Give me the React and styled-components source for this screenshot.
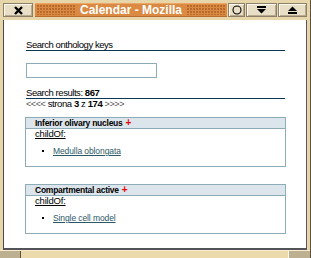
import React from "react";
import styled, { createGlobalStyle } from "styled-components";

const GlobalStyle = createGlobalStyle`
  html, body {
    margin: 0;
    padding: 0;
    background: #e6d4a8;
  }
  body {
    font-family: "Liberation Sans", Arial, sans-serif;
  }
`;

/* Window frame */
const Frame = styled.div`
  width: 311px;
  height: 258px;
  box-sizing: border-box;
  display: flex;
  flex-direction: column;
  background: #e8d6ab;
  border-right: 1px solid #5a503c;
`;

const TitleBar = styled.div`
  height: 20px;
  box-sizing: border-box;
  padding: 3px 3px 0 3px;
  display: flex;
  align-items: flex-start;
  gap: 1px;
`;

const FrameButton = styled.div`
  width: ${(p) => p.w}px;
  height: 14px;
  box-sizing: border-box;
  margin-right: ${(p) => p.gapRight || 0}px;
  background: #e9dfc6;
  border: 1px solid #8d806a;
  box-shadow: inset 1px 1px 0 #fffaec, inset -1px -1px 0 #b8aa8e;
  display: flex;
  align-items: center;
  justify-content: center;
`;

const TitleStrip = styled.div`
  flex: 1;
  height: 14px;
  display: flex;
  align-items: center;
  background: #da8a43;
  box-shadow: inset 0 1px 0 #eca565, inset 0 -1px 0 #b86d2e;
`;

const Dots = styled.div`
  flex: 1;
  height: 10px;
  margin: 0 2px;
  background-image: radial-gradient(circle at 1px 1px, #b8692b 0.7px, transparent 1px);
  background-size: 3px 3px;
`;

const Title = styled.div`
  color: #ffffff;
  font-weight: bold;
  font-size: 12px;
  line-height: 14px;
  padding: 0 3px;
  white-space: nowrap;
`;

const Client = styled.div`
  flex: 1;
  margin: 0 3px 0 3px;
  background: #ffffff;
  border-left: 1px solid #4c4a48;
  border-right: 1px solid #5a5858;
  border-bottom: 2px solid #55535a;
  padding: 20px 21px 0 22px;
  min-height: 0;
  overflow: hidden;
`;

const BottomStrip = styled.div`
  height: 8px;
  display: flex;
  background: #ecd9ac;
  border-top: 1px solid #f7ecd0;
  box-sizing: border-box;
`;

const Grip = styled.div`
  width: ${(p) => p.w}px;
  background: #bdb091;
  border-left: ${(p) => (p.side === "right" ? "1px solid #fffaf0" : "none")};
  border-right: ${(p) => (p.side === "left" ? "1px solid #5e5440" : "none")};
`;

const Spacer = styled.div`
  flex: 1;
`;

/* Page content */
const Heading = styled.div`
  font-size: 9.5px;
  letter-spacing: -0.45px;
  line-height: 10px;
  height: 10px;
  color: #000;
  border-bottom: 1px solid #0b3654;
  margin-top: ${(p) => p.mt || 0}px;
  b {
    font-weight: bold;
  }
`;

const SearchInput = styled.input`
  display: block;
  margin-top: 12px;
  width: 131px;
  height: 15px;
  box-sizing: border-box;
  border: 1px solid #8eacb8;
  padding: 0 2px;
  outline: none;
`;

const Pager = styled.div`
  font-size: 9.5px;
  letter-spacing: -0.4px;
  line-height: 10px;
  color: #000;
  span {
    color: #555;
    font-size: 9px;
  }
  b {
    font-weight: bold;
  }
`;

const Box = styled.div`
  margin: ${(p) => p.mt}px -1px 0 -1px;
  border: 1px solid #8eacb8;
`;

const BoxHeader = styled.div`
  height: 10px;
  line-height: 10px;
  background: #dde5ec;
  border-bottom: 1px solid #8eacb8;
  padding-left: 9px;
  font-size: 8.5px;
  font-weight: bold;
  letter-spacing: -0.25px;
  color: #000;
`;

const Plus = styled.span`
  color: #e60000;
  font-size: 10px;
  margin-left: 3px;
`;

const BoxBody = styled.div`
  padding: 0 9px 10px 9px;
`;

const Relation = styled.div`
  font-size: 9.5px;
  line-height: 10px;
  letter-spacing: -0.2px;
  text-decoration: underline;
  color: #000;
`;

const List = styled.ul`
  list-style: none;
  margin: 7px 0 0 0;
  padding: 0;
`;

const Item = styled.li`
  display: flex;
  align-items: center;
  height: 10px;
  padding-left: 7px;
  &::before {
    content: "";
    width: 2px;
    height: 2px;
    background: #000;
    margin-right: 9px;
  }
`;

const Link = styled.a`
  font-size: 8.5px;
  letter-spacing: -0.1px;
  line-height: 10px;
  color: #2c5866;
  text-decoration: underline;
`;

const CloseIcon = () => (
  <svg width="9" height="9" viewBox="0 0 9 9">
    <path d="M1 1 L8 8 M8 1 L1 8" stroke="#000" strokeWidth="2.4" />
  </svg>
);

const CircleIcon = () => (
  <svg width="10" height="10" viewBox="0 0 10 10">
    <circle cx="5" cy="5" r="4" fill="none" stroke="#000" strokeWidth="1.1" />
  </svg>
);

const ShadeIcon = () => (
  <svg width="9" height="8" viewBox="0 0 9 8">
    <rect x="0" y="0" width="9" height="2" fill="#000" />
    <polygon points="0,3 9,3 4.5,7.5" fill="#000" />
  </svg>
);

const EjectIcon = () => (
  <svg width="9" height="8" viewBox="0 0 9 8">
    <polygon points="4.5,0.5 9,5 0,5" fill="#000" />
    <rect x="0" y="6" width="9" height="2" fill="#000" />
  </svg>
);

const terms = [
  { name: "Inferior olivary nucleus", parent: "Medulla oblongata", mt: 8 },
  { name: "Compartmental active", parent: "Single cell model", mt: 17 },
];

export default function App() {
  return (
    <>
      <GlobalStyle />
      <Frame>
        <TitleBar>
          <FrameButton w={30} gapRight={1}>
            <CloseIcon />
          </FrameButton>
          <TitleStrip>
            <Dots />
            <Title>Calendar - Mozilla</Title>
            <Dots />
          </TitleStrip>
          <FrameButton w={17}>
            <CircleIcon />
          </FrameButton>
          <FrameButton w={31}>
            <ShadeIcon />
          </FrameButton>
          <FrameButton w={29}>
            <EjectIcon />
          </FrameButton>
        </TitleBar>

        <Client>
          <Heading>Search onthology keys</Heading>
          <SearchInput type="text" />
          <Heading mt={10}>
            Search results: <b>867</b>
          </Heading>
          <Pager>
            <span>&lt;&lt;&lt;&lt;</span> strona <b>3</b> z <b>174</b>{" "}
            <span>&gt;&gt;&gt;&gt;</span>
          </Pager>

          {terms.map((t) => (
            <Box key={t.name} mt={t.mt}>
              <BoxHeader>
                {t.name}
                <Plus>+</Plus>
              </BoxHeader>
              <BoxBody>
                <Relation>childOf:</Relation>
                <List>
                  <Item>
                    <Link href="#">{t.parent}</Link>
                  </Item>
                </List>
              </BoxBody>
            </Box>
          ))}
        </Client>

        <BottomStrip>
          <Grip w={20} side="left" />
          <Spacer />
          <Grip w={21} side="right" />
        </BottomStrip>
      </Frame>
    </>
  );
}
